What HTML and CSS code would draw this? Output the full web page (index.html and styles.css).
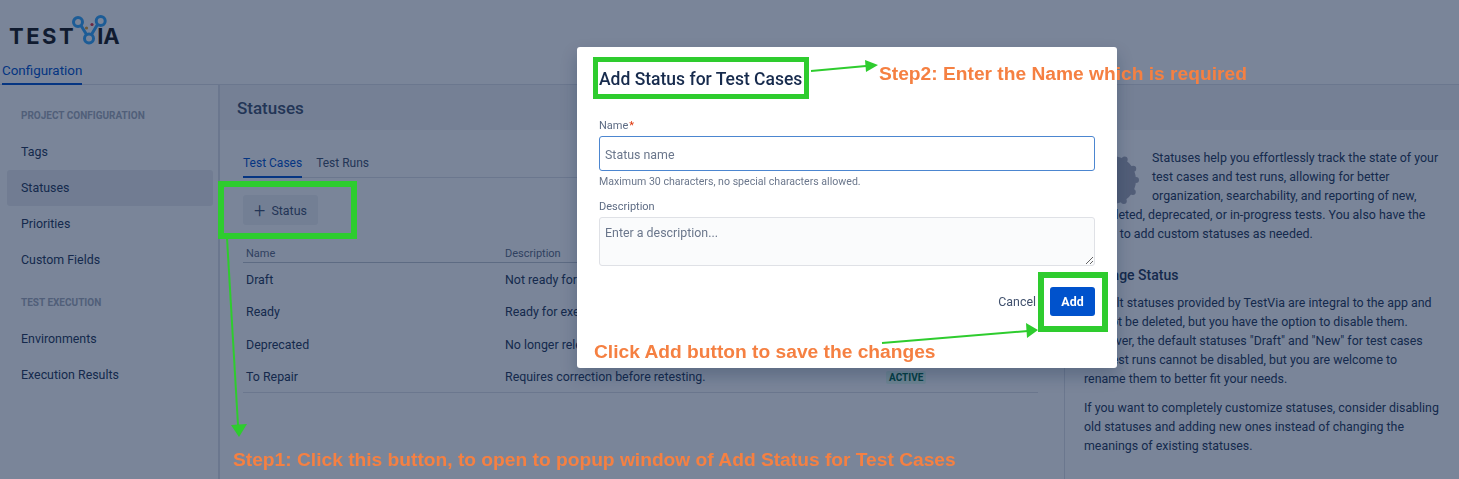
FILE: index.html
```html
<!DOCTYPE html>
<html lang="en">
<head>
    <meta charset="UTF-8">
    <title>TestVia - Statuses</title>
    <link rel="stylesheet" href="styles.css">
</head>
<body>
    <div class="app">
        <header class="topbar">
            <div class="logo">
                <span class="logo-text">TEST</span>
                <svg class="logo-v" width="36" height="36" viewBox="0 0 36 36">
                    <g fill="none" stroke="#34a5f8" stroke-width="3">
                        <circle cx="7" cy="8" r="4.500"></circle>
                        <circle cx="29.700" cy="7" r="4.500"></circle>
                        <circle cx="18" cy="24.500" r="4.500"></circle>
                        <path d="M10 11.500 L15.500 20.500 M26.500 10.500 L20.500 20.500"></path>
                    </g>
                    <circle cx="15.500" cy="14" r="1.600" fill="#e0a030"></circle>
                    <circle cx="21" cy="10.500" r="1.600" fill="#e03040"></circle>
                </svg>
                <span class="logo-text logo-end">IA</span>
            </div>
            <nav class="topnav"><a class="topnav-item">Configuration</a></nav>
        </header>

        <div class="layout">
            <aside class="sidebar">
                <h4 class="side-title">PROJECT CONFIGURATION</h4>
                <a class="side-item">Tags</a>
                <a class="side-item active">Statuses</a>
                <a class="side-item">Priorities</a>
                <a class="side-item">Custom Fields</a>
                <h4 class="side-title second">TEST EXECUTION</h4>
                <a class="side-item">Environments</a>
                <a class="side-item">Execution Results</a>
            </aside>

            <main class="content">
                <div class="page-title">Statuses</div>
                <div class="content-row">
                    <section class="statuses">
                        <div class="tabs">
                            <a class="tab active">Test Cases</a>
                            <a class="tab">Test Runs</a>
                        </div>
                        <button class="btn-add-status"><span class="plus">+</span> Status</button>
                        <table class="status-table">
                            <thead>
                                <tr><th>Name</th><th>Description</th><th>Status</th></tr>
                            </thead>
                            <tbody>
                                <tr><td>Draft</td><td>Not ready for execution.</td><td><span class="badge">ACTIVE</span></td></tr>
                                <tr><td>Ready</td><td>Ready for execution.</td><td><span class="badge">ACTIVE</span></td></tr>
                                <tr><td>Deprecated</td><td>No longer relevant.</td><td><span class="badge">ACTIVE</span></td></tr>
                                <tr><td>To Repair</td><td>Requires correction before retesting.</td><td><span class="badge">ACTIVE</span></td></tr>
                            </tbody>
                        </table>
                    </section>

                    <aside class="help">
                        <svg class="help-icon" width="56" height="56" viewBox="0 0 56 56">
                            <circle cx="28" cy="28" r="24" fill="#a8aab8"></circle>
                            <circle cx="28" cy="28" r="24" fill="none" stroke="#a8aab8" stroke-width="6" stroke-linecap="round" stroke-dasharray="0 12.570"></circle>
                        </svg>
                        <p class="intro">Statuses help you effortlessly track the state of your test cases and test runs, allowing for better organization, searchability, and reporting of new, completed, deprecated, or in-progress tests. You also have the ability to add custom statuses as needed.</p>
                        <h3>Manage Status</h3>
                        <p>Default statuses provided by TestVia are integral to the app and cannot be deleted, but you have the option to disable them. However, the default statuses "Draft" and "New" for test cases and test runs cannot be disabled, but you are welcome to rename them to better fit your needs.</p>
                        <p>If you want to completely customize statuses, consider disabling old statuses and adding new ones instead of changing the meanings of existing statuses.</p>
                    </aside>
                </div>
            </main>
        </div>
    </div>

    <div class="blanket"></div>

    <div class="modal">
        <h2 class="modal-title">Add Status for Test Cases</h2>
        <label class="field-label">Name<span class="req">*</span></label>
        <input class="field-input" type="text" placeholder="Status name">
        <div class="field-help">Maximum 30 characters, no special characters allowed.</div>
        <label class="field-label desc-label">Description</label>
        <textarea class="field-area" placeholder="Enter a description..."></textarea>
        <div class="modal-actions">
            <button class="btn-cancel">Cancel</button>
            <button class="btn-primary">Add</button>
        </div>
    </div>

    <!-- tutorial marks drawn on top of the screenshot -->
    <div class="mark mark-title"></div>
    <div class="mark mark-status"></div>
    <div class="mark mark-add"></div>
    <svg class="arrows" width="1459" height="479" viewBox="0 0 1459 479">
        <g stroke="#2ecc2e" stroke-width="2" fill="#2ecc2e">
            <path d="M811 71 L866 66"></path>
            <path d="M227 238 L238 425"></path>
            <path d="M882 343 L1028 331"></path>
        </g>
        <g fill="#2ecc2e">
            <path d="M865 60 L878 65 L866 72 Z"></path>
            <path d="M231 425 L247 424 L239 437 Z"></path>
            <path d="M1026 323 L1038 330 L1027 338 Z"></path>
        </g>
    </svg>
    <div class="note note-step2">Step2: Enter the Name which is required</div>
    <div class="note note-click">Click Add button to save the changes</div>
    <div class="note note-step1">Step1: Click this button, to open to popup window of Add Status for Test Cases</div>
</body>
</html>
```

FILE: styles.css
```css
* {
    margin: 0;
    padding: 0;
    box-sizing: border-box;
}

html, body {
    height: 100%;
    overflow: hidden;
}

body {
    font-family: Roboto, "Noto Sans", sans-serif;
    font-size: 12.400px;
    color: #253858;
    background: #ffffff;
}

.app {
    height: 479px;
    display: flex;
    flex-direction: column;
}

/* header */
.topbar {
    height: 85px;
    border-bottom: 1px solid #dfe1e6;
    padding-top: 14px;
    display: flex;
    flex-direction: column;
}

.logo {
    display: flex;
    align-items: flex-end;
    height: 32px;
    padding-left: 9px;
}

.logo-text {
    font-family: "Inter", sans-serif;
    font-weight: 700;
    font-size: 22px;
    letter-spacing: 2.500px;
    line-height: 21px;
    color: #1a1a1a;
    margin-bottom: -1px;
}

.logo-end {
    letter-spacing: 0;
    margin-left: -10px;
}

.logo-v {
    margin: 0 0 -4px -5px;
}

.topnav {
    margin-top: auto;
    padding-left: 2px;
}

.topnav-item {
    display: inline-block;
    padding: 0 0 5px 0;
    color: #0052cc;
    border-bottom: 2px solid #0052cc;
    font-size: 13.400px;
    margin-bottom: -1px;
}

/* sidebar */
.layout {
    flex: 1;
    display: flex;
    min-height: 0;
}

.sidebar {
    width: 220px;
    flex: none;
    border-right: 2px solid #dfe1e6;
    padding: 24px 5px 0 7px;
}

.side-title {
    font-size: 10px;
    font-weight: 700;
    color: #a5adba;
    padding-left: 14px;
    height: 14px;
    line-height: 14px;
    margin-bottom: 11px;
}

.side-title.second {
    margin-top: 18px;
}

.side-item {
    display: block;
    height: 36px;
    line-height: 36px;
    padding-left: 14px;
    border-radius: 3px;
}

.side-item.active {
    background: #ebecf0;
}

/* main */
.content {
    flex: 1;
    display: flex;
    flex-direction: column;
    min-width: 0;
}

.page-title {
    height: 45px;
    line-height: 47px;
    padding-left: 17px;
    font-size: 17px;
    font-weight: 500;
    color: #42526e;
    background: #f4f5f7;
}

.content-row {
    flex: 1;
    display: flex;
    min-height: 0;
}

.statuses {
    width: 845px;
    flex: none;
    padding: 23px 26px 0 23px;
    border-right: 1px solid #dfe1e6;
}

.tabs {
    display: flex;
    gap: 14px;
    height: 25px;
    border-bottom: 1px solid #dfe1e6;
}

.tab {
    height: 25px;
    line-height: 20px;
    font-size: 12px;
    color: #42526e;
}

.tab.active {
    color: #0052cc;
    border-bottom: 2px solid #0052cc;
}

.btn-add-status {
    display: block;
    width: 75px;
    height: 30px;
    margin-top: 17px;
    border: none;
    border-radius: 3px;
    background: #f0f1f4;
    color: #42526e;
    font: inherit;
}

.plus {
    font-size: 20px;
    font-weight: 300;
    line-height: 14px;
    vertical-align: -2px;
    margin-right: 3px;
}

.status-table {
    width: 100%;
    margin-top: 20px;
    border-collapse: collapse;
    table-layout: fixed;
    border-bottom: 1px solid #dfe1e6;
}

.status-table th {
    text-align: left;
    font-weight: 400;
    font-size: 11px;
    color: #5e6c84;
    height: 17px;
    padding-left: 3px;
    border-bottom: 1px solid #c1c7d0;
}

.status-table th:nth-child(1) { width: 259px; }
.status-table th:nth-child(2) { width: 382px; }

.status-table td {
    height: 32.700px;
    padding: 1px 0 0 3px;
}

.badge {
    display: inline-block;
    margin-left: -1px;
    padding: 0 3px;
    height: 13px;
    line-height: 13px;
    font-size: 10px;
    font-weight: 700;
    color: #006644;
    background: #e3fcef;
    border-radius: 2px;
}

/* help panel */
.help {
    flex: 1;
    padding: 18px 18px 0 19px;
    line-height: 19px;
}

/* the blob hangs below its float box, so line four runs under it */
.help-icon {
    float: left;
    margin: 4px 12px -8px 0;
}

.help p {
    margin-bottom: 10px;
}

.help .intro {
    margin-bottom: 22px;
}

.help h3 {
    font-size: 14px;
    font-weight: 500;
    line-height: 20px;
    margin-bottom: 8px;
}

/* modal */
.blanket {
    position: fixed;
    inset: 0;
    background: rgba(9, 30, 66, 0.54);
}

.modal {
    position: absolute;
    left: 577px;
    top: 47px;
    width: 540px;
    height: 321px;
    padding: 19px 22px 0 22px;
    background: #ffffff;
    border-radius: 3px;
    box-shadow: 0 8px 16px rgba(9, 30, 66, 0.25);
    display: flex;
    flex-direction: column;
}

.modal-title {
    font-size: 17.500px;
    font-weight: 500;
    line-height: 26px;
    color: #172b4d;
    margin-bottom: 27px;
}

.field-label {
    font-size: 11px;
    line-height: 14px;
    color: #5e6c84;
    margin-bottom: 3px;
}

.desc-label {
    margin-top: 11px;
}

.req {
    color: #de350b;
    margin-left: 1px;
}

.field-input {
    height: 35px;
    padding: 1px 5px 0;
    border: 1px solid #4c86d0;
    border-radius: 3px;
    font: inherit;
    color: #172b4d;
}

.field-input::placeholder,
.field-area::placeholder {
    color: #6b778c;
    opacity: 1;
}

.field-help {
    font-size: 10.600px;
    line-height: 14px;
    margin-top: 4px;
    color: #6b778c;
}

.field-area {
    height: 49px;
    padding: 7px 5px 5px;
    border: 1px solid #dfe1e6;
    border-radius: 3px;
    background: #fafbfc;
    font: inherit;
}

.modal-actions {
    display: flex;
    justify-content: flex-end;
    align-items: center;
    gap: 14px;
    margin-top: 21px;
}

.btn-cancel {
    border: none;
    background: none;
    font: inherit;
    color: #42526e;
}

.btn-primary {
    width: 45px;
    height: 29px;
    border: none;
    border-radius: 3px;
    background: #0052cc;
    color: #ffffff;
    font: inherit;
    font-weight: 700;
}

/* annotations */
.mark {
    position: absolute;
    border: 6px solid #2ecc2e;
}

.mark-title {
    left: 593px;
    top: 57px;
    width: 216px;
    height: 42px;
    border-width: 5px;
}

.mark-status {
    left: 218px;
    top: 181px;
    width: 139px;
    height: 58px;
}

.mark-add {
    left: 1038px;
    top: 272px;
    width: 70px;
    height: 60px;
}

.arrows {
    position: absolute;
    left: 0;
    top: 0;
}

.note {
    position: absolute;
    font-family: "Liberation Sans", Arial, sans-serif;
    font-weight: 700;
    font-size: 19.200px;
    line-height: 24px;
    color: #f58042;
    white-space: nowrap;
}

.note-step2 {
    left: 879px;
    top: 62px;
}

.note-click {
    left: 594px;
    top: 340px;
}

.note-step1 {
    left: 233px;
    top: 448px;
}
```
